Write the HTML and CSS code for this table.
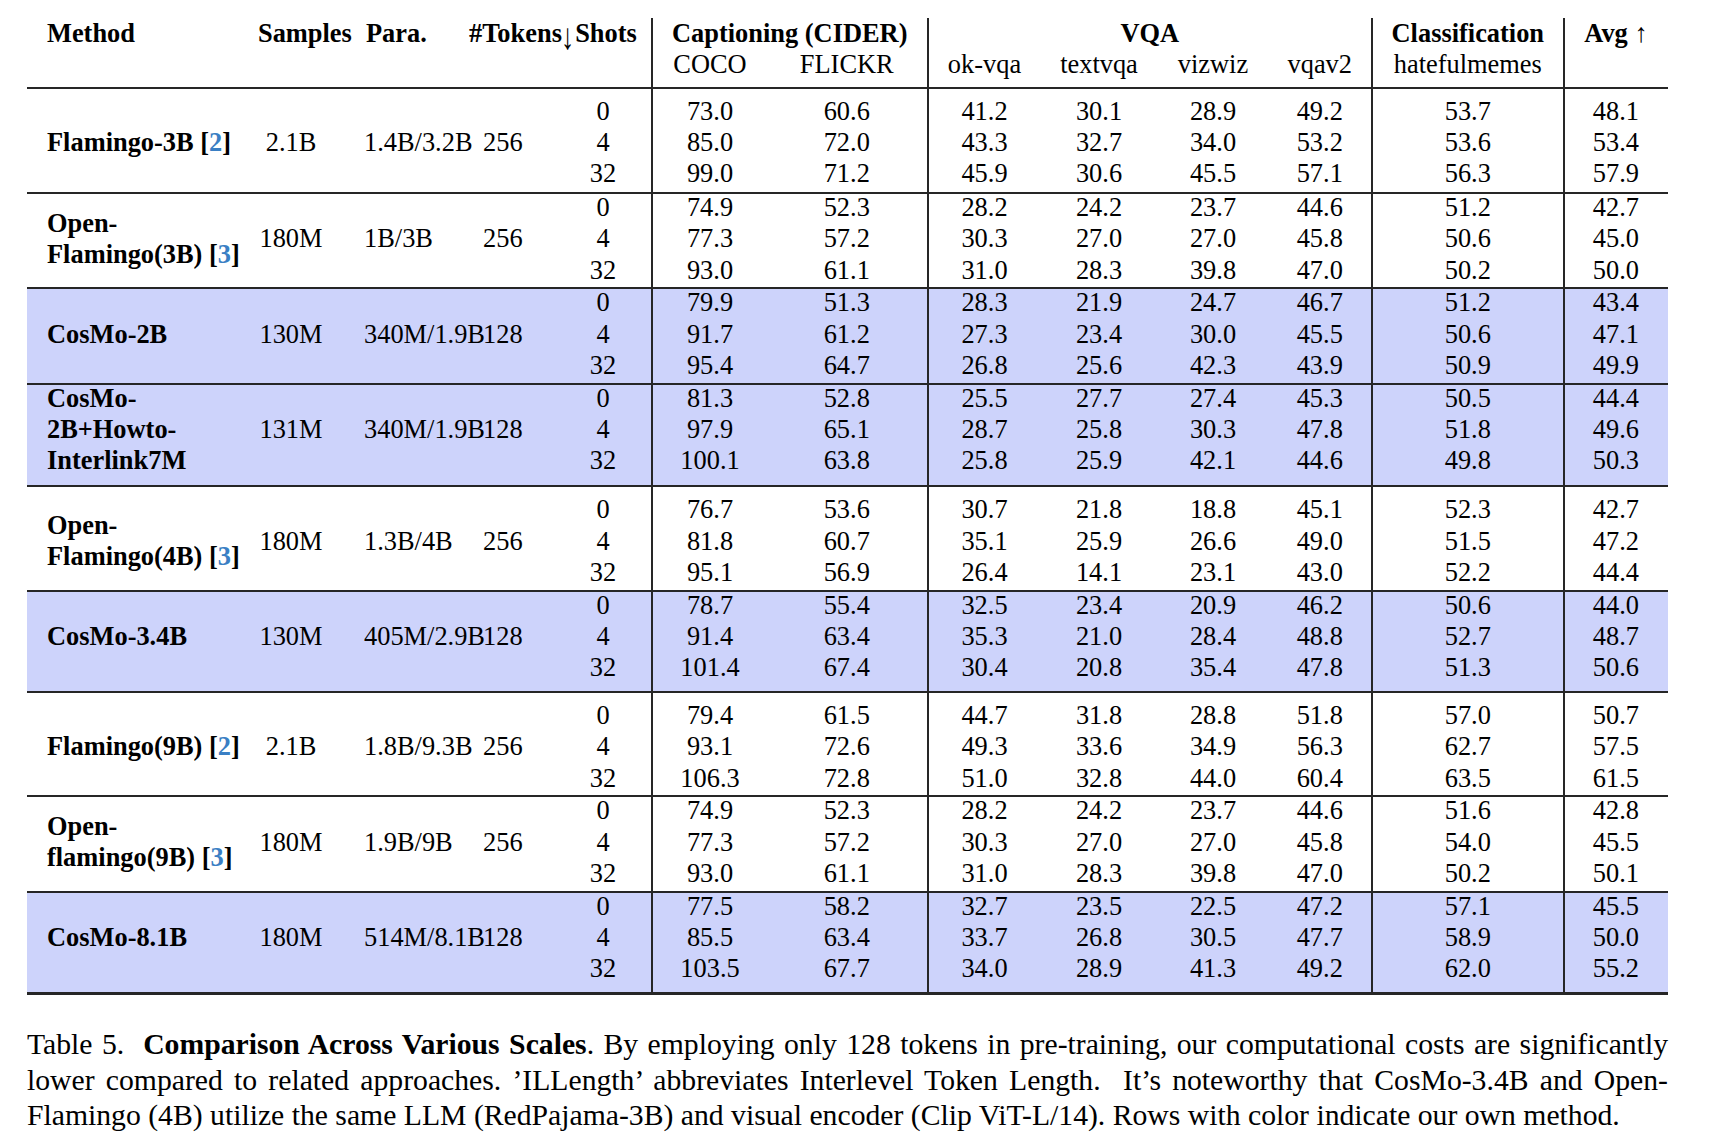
FILE: index.html
```html
<!DOCTYPE html>
<html lang="en">
<head>
<meta charset="utf-8">
<title>Table 5</title>
<link rel="stylesheet" href="styles.css">
</head>
<body>
<div class="tbl">
  <div class="cols head">
    <div class="h b hm">Method</div>
    <div class="h b hs">Samples</div>
    <div class="h b hp">Para.</div>
    <div class="h b ht">#Tokens<span class="arr dn">↓</span>Shots</div>
    <div class="h b hcap vr">Captioning (CIDER)</div>
    <div class="h b hvqa vr">VQA</div>
    <div class="h b hcls vr">Classification</div>
    <div class="h b havg vr">Avg <span class="arr">↑</span></div>
    <div class="h sub c6 vr">COCO</div>
    <div class="h sub c7">FLICKR</div>
    <div class="h sub c8 vr">ok-vqa</div>
    <div class="h sub c9">textvqa</div>
    <div class="h sub c10">vizwiz</div>
    <div class="h sub c11">vqav2</div>
    <div class="h sub c12 vr">hatefulmemes</div>
  </div>

  <div class="cols grp pt-hi first">
    <div class="c m"><div class="in"><div>Flamingo-3B [<span class="cite">2</span>]</div></div></div>
    <div class="c smp"><div class="in"><div>2.1B</div></div></div>
    <div class="c par"><div class="in"><div>1.4B/3.2B</div></div></div>
    <div class="c tok"><div class="in"><div>256</div></div></div>
    <div class="c sh"><div class="in"><div>0</div><div>4</div><div>32</div></div></div>
    <div class="c vr"><div class="in"><div>73.0</div><div>85.0</div><div>99.0</div></div></div>
    <div class="c"><div class="in"><div>60.6</div><div>72.0</div><div>71.2</div></div></div>
    <div class="c vr"><div class="in"><div>41.2</div><div>43.3</div><div>45.9</div></div></div>
    <div class="c"><div class="in"><div>30.1</div><div>32.7</div><div>30.6</div></div></div>
    <div class="c"><div class="in"><div>28.9</div><div>34.0</div><div>45.5</div></div></div>
    <div class="c"><div class="in"><div>49.2</div><div>53.2</div><div>57.1</div></div></div>
    <div class="c vr"><div class="in"><div>53.7</div><div>53.6</div><div>56.3</div></div></div>
    <div class="c vr"><div class="in"><div>48.1</div><div>53.4</div><div>57.9</div></div></div>
  </div>

  <div class="cols grp">
    <div class="c m"><div class="in"><div>Open-</div><div>Flamingo(3B) [<span class="cite">3</span>]</div></div></div>
    <div class="c smp"><div class="in"><div>180M</div></div></div>
    <div class="c par"><div class="in"><div>1B/3B</div></div></div>
    <div class="c tok"><div class="in"><div>256</div></div></div>
    <div class="c sh"><div class="in"><div>0</div><div>4</div><div>32</div></div></div>
    <div class="c vr"><div class="in"><div>74.9</div><div>77.3</div><div>93.0</div></div></div>
    <div class="c"><div class="in"><div>52.3</div><div>57.2</div><div>61.1</div></div></div>
    <div class="c vr"><div class="in"><div>28.2</div><div>30.3</div><div>31.0</div></div></div>
    <div class="c"><div class="in"><div>24.2</div><div>27.0</div><div>28.3</div></div></div>
    <div class="c"><div class="in"><div>23.7</div><div>27.0</div><div>39.8</div></div></div>
    <div class="c"><div class="in"><div>44.6</div><div>45.8</div><div>47.0</div></div></div>
    <div class="c vr"><div class="in"><div>51.2</div><div>50.6</div><div>50.2</div></div></div>
    <div class="c vr"><div class="in"><div>42.7</div><div>45.0</div><div>50.0</div></div></div>
  </div>

  <div class="cols grp hl">
    <div class="c m"><div class="in"><div>CosMo-2B</div></div></div>
    <div class="c smp"><div class="in"><div>130M</div></div></div>
    <div class="c par"><div class="in"><div>340M/1.9B</div></div></div>
    <div class="c tok"><div class="in"><div>128</div></div></div>
    <div class="c sh"><div class="in"><div>0</div><div>4</div><div>32</div></div></div>
    <div class="c vr"><div class="in"><div>79.9</div><div>91.7</div><div>95.4</div></div></div>
    <div class="c"><div class="in"><div>51.3</div><div>61.2</div><div>64.7</div></div></div>
    <div class="c vr"><div class="in"><div>28.3</div><div>27.3</div><div>26.8</div></div></div>
    <div class="c"><div class="in"><div>21.9</div><div>23.4</div><div>25.6</div></div></div>
    <div class="c"><div class="in"><div>24.7</div><div>30.0</div><div>42.3</div></div></div>
    <div class="c"><div class="in"><div>46.7</div><div>45.5</div><div>43.9</div></div></div>
    <div class="c vr"><div class="in"><div>51.2</div><div>50.6</div><div>50.9</div></div></div>
    <div class="c vr"><div class="in"><div>43.4</div><div>47.1</div><div>49.9</div></div></div>
  </div>

  <div class="cols grp hl pb-hi tall">
    <div class="c m"><div class="in"><div>CosMo-</div><div>2B+Howto-</div><div>Interlink7M</div></div></div>
    <div class="c smp"><div class="in"><div>131M</div></div></div>
    <div class="c par"><div class="in"><div>340M/1.9B</div></div></div>
    <div class="c tok"><div class="in"><div>128</div></div></div>
    <div class="c sh"><div class="in"><div>0</div><div>4</div><div>32</div></div></div>
    <div class="c vr"><div class="in"><div>81.3</div><div>97.9</div><div>100.1</div></div></div>
    <div class="c"><div class="in"><div>52.8</div><div>65.1</div><div>63.8</div></div></div>
    <div class="c vr"><div class="in"><div>25.5</div><div>28.7</div><div>25.8</div></div></div>
    <div class="c"><div class="in"><div>27.7</div><div>25.8</div><div>25.9</div></div></div>
    <div class="c"><div class="in"><div>27.4</div><div>30.3</div><div>42.1</div></div></div>
    <div class="c"><div class="in"><div>45.3</div><div>47.8</div><div>44.6</div></div></div>
    <div class="c vr"><div class="in"><div>50.5</div><div>51.8</div><div>49.8</div></div></div>
    <div class="c vr"><div class="in"><div>44.4</div><div>49.6</div><div>50.3</div></div></div>
  </div>

  <div class="cols grp pt-hi">
    <div class="c m"><div class="in"><div>Open-</div><div>Flamingo(4B) [<span class="cite">3</span>]</div></div></div>
    <div class="c smp"><div class="in"><div>180M</div></div></div>
    <div class="c par"><div class="in"><div>1.3B/4B</div></div></div>
    <div class="c tok"><div class="in"><div>256</div></div></div>
    <div class="c sh"><div class="in"><div>0</div><div>4</div><div>32</div></div></div>
    <div class="c vr"><div class="in"><div>76.7</div><div>81.8</div><div>95.1</div></div></div>
    <div class="c"><div class="in"><div>53.6</div><div>60.7</div><div>56.9</div></div></div>
    <div class="c vr"><div class="in"><div>30.7</div><div>35.1</div><div>26.4</div></div></div>
    <div class="c"><div class="in"><div>21.8</div><div>25.9</div><div>14.1</div></div></div>
    <div class="c"><div class="in"><div>18.8</div><div>26.6</div><div>23.1</div></div></div>
    <div class="c"><div class="in"><div>45.1</div><div>49.0</div><div>43.0</div></div></div>
    <div class="c vr"><div class="in"><div>52.3</div><div>51.5</div><div>52.2</div></div></div>
    <div class="c vr"><div class="in"><div>42.7</div><div>47.2</div><div>44.4</div></div></div>
  </div>

  <div class="cols grp hl pb-hi">
    <div class="c m"><div class="in"><div>CosMo-3.4B</div></div></div>
    <div class="c smp"><div class="in"><div>130M</div></div></div>
    <div class="c par"><div class="in"><div>405M/2.9B</div></div></div>
    <div class="c tok"><div class="in"><div>128</div></div></div>
    <div class="c sh"><div class="in"><div>0</div><div>4</div><div>32</div></div></div>
    <div class="c vr"><div class="in"><div>78.7</div><div>91.4</div><div>101.4</div></div></div>
    <div class="c"><div class="in"><div>55.4</div><div>63.4</div><div>67.4</div></div></div>
    <div class="c vr"><div class="in"><div>32.5</div><div>35.3</div><div>30.4</div></div></div>
    <div class="c"><div class="in"><div>23.4</div><div>21.0</div><div>20.8</div></div></div>
    <div class="c"><div class="in"><div>20.9</div><div>28.4</div><div>35.4</div></div></div>
    <div class="c"><div class="in"><div>46.2</div><div>48.8</div><div>47.8</div></div></div>
    <div class="c vr"><div class="in"><div>50.6</div><div>52.7</div><div>51.3</div></div></div>
    <div class="c vr"><div class="in"><div>44.0</div><div>48.7</div><div>50.6</div></div></div>
  </div>

  <div class="cols grp pt-hi">
    <div class="c m"><div class="in"><div>Flamingo(9B) [<span class="cite">2</span>]</div></div></div>
    <div class="c smp"><div class="in"><div>2.1B</div></div></div>
    <div class="c par"><div class="in"><div>1.8B/9.3B</div></div></div>
    <div class="c tok"><div class="in"><div>256</div></div></div>
    <div class="c sh"><div class="in"><div>0</div><div>4</div><div>32</div></div></div>
    <div class="c vr"><div class="in"><div>79.4</div><div>93.1</div><div>106.3</div></div></div>
    <div class="c"><div class="in"><div>61.5</div><div>72.6</div><div>72.8</div></div></div>
    <div class="c vr"><div class="in"><div>44.7</div><div>49.3</div><div>51.0</div></div></div>
    <div class="c"><div class="in"><div>31.8</div><div>33.6</div><div>32.8</div></div></div>
    <div class="c"><div class="in"><div>28.8</div><div>34.9</div><div>44.0</div></div></div>
    <div class="c"><div class="in"><div>51.8</div><div>56.3</div><div>60.4</div></div></div>
    <div class="c vr"><div class="in"><div>57.0</div><div>62.7</div><div>63.5</div></div></div>
    <div class="c vr"><div class="in"><div>50.7</div><div>57.5</div><div>61.5</div></div></div>
  </div>

  <div class="cols grp">
    <div class="c m"><div class="in"><div>Open-</div><div>flamingo(9B) [<span class="cite">3</span>]</div></div></div>
    <div class="c smp"><div class="in"><div>180M</div></div></div>
    <div class="c par"><div class="in"><div>1.9B/9B</div></div></div>
    <div class="c tok"><div class="in"><div>256</div></div></div>
    <div class="c sh"><div class="in"><div>0</div><div>4</div><div>32</div></div></div>
    <div class="c vr"><div class="in"><div>74.9</div><div>77.3</div><div>93.0</div></div></div>
    <div class="c"><div class="in"><div>52.3</div><div>57.2</div><div>61.1</div></div></div>
    <div class="c vr"><div class="in"><div>28.2</div><div>30.3</div><div>31.0</div></div></div>
    <div class="c"><div class="in"><div>24.2</div><div>27.0</div><div>28.3</div></div></div>
    <div class="c"><div class="in"><div>23.7</div><div>27.0</div><div>39.8</div></div></div>
    <div class="c"><div class="in"><div>44.6</div><div>45.8</div><div>47.0</div></div></div>
    <div class="c vr"><div class="in"><div>51.6</div><div>54.0</div><div>50.2</div></div></div>
    <div class="c vr"><div class="in"><div>42.8</div><div>45.5</div><div>50.1</div></div></div>
  </div>

  <div class="cols grp hl pb-hi last">
    <div class="c m"><div class="in"><div>CosMo-8.1B</div></div></div>
    <div class="c smp"><div class="in"><div>180M</div></div></div>
    <div class="c par"><div class="in"><div>514M/8.1B</div></div></div>
    <div class="c tok"><div class="in"><div>128</div></div></div>
    <div class="c sh"><div class="in"><div>0</div><div>4</div><div>32</div></div></div>
    <div class="c vr"><div class="in"><div>77.5</div><div>85.5</div><div>103.5</div></div></div>
    <div class="c"><div class="in"><div>58.2</div><div>63.4</div><div>67.7</div></div></div>
    <div class="c vr"><div class="in"><div>32.7</div><div>33.7</div><div>34.0</div></div></div>
    <div class="c"><div class="in"><div>23.5</div><div>26.8</div><div>28.9</div></div></div>
    <div class="c"><div class="in"><div>22.5</div><div>30.5</div><div>41.3</div></div></div>
    <div class="c"><div class="in"><div>47.2</div><div>47.7</div><div>49.2</div></div></div>
    <div class="c vr"><div class="in"><div>57.1</div><div>58.9</div><div>62.0</div></div></div>
    <div class="c vr"><div class="in"><div>45.5</div><div>50.0</div><div>55.2</div></div></div>
  </div>
</div>

<div class="cap">
  <div class="j">Table 5.&nbsp; <b>Comparison Across Various Scales</b>. By employing only 128 tokens in pre-training, our computational costs are significantly</div>
  <div class="j">lower compared to related approaches. &#8217;ILLength&#8217; abbreviates Interlevel Token Length.&nbsp; It&#8217;s noteworthy that CosMo-3.4B and Open-</div>
  <div>Flamingo (4B) utilize the same LLM (RedPajama-3B) and visual encoder (Clip ViT-L/14). Rows with color indicate our own method.</div>
</div>
</body>
</html>
```

FILE: styles.css
```css
body {
  margin: 18px 0 0 27px;
  background: #ffffff;
  color: #000000;
  font-family: "Liberation Serif", "Times New Roman", serif;
}

.tbl {
  width: 1641px;
  font-size: 26.4px;
  line-height: 31.2px;
}

.cols {
  display: grid;
  grid-template-columns: 218px 92px 146px 39px 129px 116px 159.5px 114px 117px 111px 102.5px 191.6px 104.7px;
}

.vr {
  border-left: 2px solid #262626;
}

/* header */
.head {
  grid-template-rows: 31.2px 37.8px;
}
.h {
  white-space: nowrap;
  text-align: center;
}
.b {
  font-weight: bold;
}
.hm {
  grid-column: 1;
  grid-row: 1;
  text-align: left;
  padding-left: 20px;
}
.hs {
  grid-column: 2;
  grid-row: 1;
  text-align: left;
  padding-left: 13px;
}
.hp {
  grid-column: 3;
  grid-row: 1;
  text-align: left;
  padding-left: 29px;
}
.ht {
  grid-column: 4 / 6;
  grid-row: 1;
  text-align: left;
  margin-left: -14px;
}
.arr {
  font-weight: normal;
}
.dn {
  display: inline-block;
  margin: 0 1px 0 -1px;
  transform: translateY(4px) scaleY(1.4);
}
.hcap { grid-column: 6 / 8; grid-row: 1; }
.hvqa { grid-column: 8 / 12; grid-row: 1; }
.hcls { grid-column: 12; grid-row: 1; }
.havg { grid-column: 13; grid-row: 1 / 3; }
.sub { grid-row: 2; }
.c6 { grid-column: 6; }
.c7 { grid-column: 7; }
.c8 { grid-column: 8; }
.c9 { grid-column: 9; }
.c10 { grid-column: 10; }
.c11 { grid-column: 11; }
.c12 { grid-column: 12; }

/* body groups */
.grp {
  border-top: 2px solid #262626;
}
.grp.last {
  border-bottom: 3px solid #262626;
}
.hl {
  background: #cdd3fb;
}
.c {
  white-space: nowrap;
  text-align: center;
  padding-bottom: 1.6px;
}
.pb-hi .c {
  padding-bottom: 8px;
}
.tall .c {
  padding-bottom: 9.2px;
}
.in {
  height: 93.6px;
  margin-top: -2px;
  display: flex;
  flex-direction: column;
  justify-content: center;
}
.pt-hi .in {
  margin-top: 7px;
}
.first .in {
  margin-top: 6.8px;
}
.first .c {
  padding-bottom: 2.9px;
}
.m {
  text-align: left;
  padding-left: 20px;
  font-weight: bold;
}
.par {
  text-align: left;
  padding-left: 27px;
}
.tok {
  text-align: right;
}
.sh {
  padding-left: 33px;
}
.cite {
  color: #3a7fc4;
}

/* caption */
.cap {
  width: 1641px;
  margin-top: 31.8px;
  font-size: 29.7px;
  line-height: 35.6px;
}
.j {
  text-align: justify;
  text-align-last: justify;
}
```
